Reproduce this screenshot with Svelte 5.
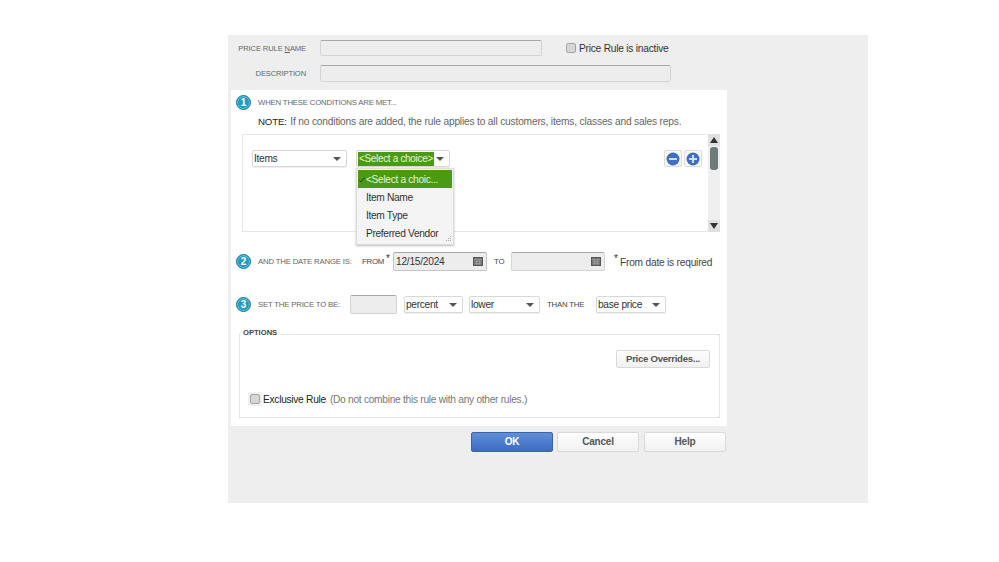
<script>
    let menu = ["Item Name", "Item Type", "Preferred Vendor"];
</script>

{#snippet badge(n)}
    <span class="badge">{n}</span>
{/snippet}

{#snippet caret()}
    <svg class="caret" width="8" height="4" viewBox="0 0 8 4"><path d="M0 0H8L4 4Z" fill="#555" /></svg>
{/snippet}

{#snippet select(label, cls)}
    <div class="select {cls}"><span>{label}</span>{@render caret()}</div>
{/snippet}

{#snippet cal()}
    <svg width="10" height="9" viewBox="0 0 10 9">
        <rect x="0.5" y="0.5" width="9" height="8" fill="#777" stroke="#555" />
        <path d="M1 2.5H9M2 4.5H8M2 6.5H8M3.5 3V8M6.5 3V8" stroke="#a5a5a5" stroke-width="0.6" />
    </svg>
{/snippet}

<div class="page">
    <div class="dialog">
        <div class="top-row first">
            <span class="top-label"><span>PRICE RULE <u>N</u>AME</span></span>
            <div class="field name"></div>
            <span class="check"></span>
            <span class="inactive">Price Rule is inactive</span>
        </div>
        <div class="top-row second">
            <span class="top-label"><span>DESCRIPTION</span></span>
            <div class="field desc"></div>
        </div>

        <div class="panel">
            <div class="step-head">
                {@render badge(1)}
                <span class="caps">WHEN THESE CONDITIONS ARE MET...</span>
            </div>
            <p class="note"><span>NOTE:</span> If no conditions are added, the rule applies to all customers, items, classes and sales reps.</p>

            <div class="conditions">
                <div class="cond-body">
                    {@render select("Items", "items")}
                    <div class="choice-wrap">
                        <div class="select choice"><span class="picked">&lt;Select a choice&gt;</span>{@render caret()}</div>
                        <div class="menu">
                            <div class="menu-item active">
                                <svg class="tick" width="6" height="6" viewBox="0 0 6 6"><path d="M0.5 3.5L2 5L5.5 0.5" fill="none" stroke="#173f00" /></svg>
                                &lt;Select a choic...
                            </div>
                            {#each menu as m}
                                <div class="menu-item">{m}</div>
                            {/each}
                            <svg class="grip" width="8" height="8" viewBox="0 0 8 8">
                                <path d="M6 1h1v1H6zM4 3h1v1H4zM6 3h1v1H6zM2 5h1v1H2zM4 5h1v1H4zM6 5h1v1H6z" fill="#aaa" />
                            </svg>
                        </div>
                    </div>
                    <div class="actions">
                        <button class="round-btn" aria-label="Remove">
                            <svg width="14" height="14" viewBox="0 0 14 14"><circle cx="7" cy="7" r="6.5" fill="#3f6fc0" /><path d="M3 7H11" stroke="#cfe0f7" stroke-width="2" /></svg>
                        </button>
                        <button class="round-btn" aria-label="Add">
                            <svg width="14" height="14" viewBox="0 0 14 14"><circle cx="7" cy="7" r="6.5" fill="#3f6fc0" /><path d="M3 7H11M7 3V11" stroke="#cfe0f7" stroke-width="2" /></svg>
                        </button>
                    </div>
                </div>
                <div class="scrollbar">
                    <svg class="arrow" width="12" height="12" viewBox="0 0 12 12"><path d="M2 9L6 3L10 9Z" fill="#333" /></svg>
                    <div class="track"><div class="thumb"></div></div>
                    <svg class="arrow" width="12" height="12" viewBox="0 0 12 12"><path d="M2 3L6 9L10 3Z" fill="#333" /></svg>
                </div>
            </div>

            <div class="date-row">
                {@render badge(2)}
                <span class="caps range">AND THE DATE RANGE IS:</span>
                <span class="small from">FROM</span>
                <span class="star">*</span>
                <div class="field date filled"><span>12/15/2024</span>{@render cal()}</div>
                <span class="small to">TO</span>
                <div class="field date"><span></span>{@render cal()}</div>
                <span class="star req-star">*</span>
                <span class="req">From date is required</span>
            </div>

            <div class="price-row">
                {@render badge(3)}
                <span class="caps price-label">SET THE PRICE TO BE:</span>
                <div class="field amount"></div>
                {@render select("percent", "percent")}
                {@render select("lower", "lower")}
                <span class="small than">THAN THE</span>
                {@render select("base price", "base")}
            </div>

            <div class="options">
                <span class="legend">OPTIONS</span>
                <div class="override-row">
                    <button class="btn override">Price Overrides...</button>
                </div>
                <div class="exclusive">
                    <span class="check-wrap"><span class="check"></span></span>
                    <span class="ex-label">Exclusive Rule</span>
                    <span class="ex-note">(Do not combine this rule with any other rules.)</span>
                </div>
            </div>
        </div>

        <div class="footer">
            <button class="btn primary">OK</button>
            <button class="btn">Cancel</button>
            <button class="btn help">Help</button>
        </div>
    </div>
</div>

<style>
    :global(body) {
        margin: 0;
        background: #fff;
    }
    .page {
        width: 999px;
        height: 562px;
        padding: 35px 0 0 228px;
        box-sizing: border-box;
        font-family: "Liberation Sans", Arial, sans-serif;
        color: #444;
        overflow: hidden;
    }
    .dialog {
        width: 640px;
        height: 468px;
        background: #eeeeee;
        padding: 5px 0 0 3px;
        box-sizing: border-box;
    }
    .top-row {
        display: flex;
        align-items: center;
        height: 16px;
    }
    .second {
        margin-top: 9px;
    }
    .top-label {
        flex: none;
        width: 75px;
        display: flex;
        justify-content: flex-end;
        margin-right: 14px;
        font-size: 7.6px;
        letter-spacing: -0.13px;
        color: #666;
        white-space: nowrap;
    }
    .field {
        flex: none;
        box-sizing: border-box;
        background: #ededed;
        border: 1px solid #d4d4d4;
        border-top-color: #a8a8a8;
        border-radius: 2px;
    }
    .name {
        width: 222px;
        height: 16px;
        margin-right: 24px;
    }
    .desc {
        width: 351px;
        height: 17px;
    }
    .check {
        display: block;
        flex: none;
        width: 10px;
        height: 10px;
        box-sizing: border-box;
        background: #d6d6d6;
        border: 1px solid #a5a5a5;
        border-radius: 2px;
    }
    .inactive {
        margin-left: 3px;
        font-size: 10.2px;
        letter-spacing: -0.23px;
        color: #333;
        white-space: nowrap;
    }
    .panel {
        width: 496px;
        height: 336px;
        margin-top: 9px;
        background: #fff;
        box-sizing: border-box;
        padding: 5px 0 0 5px;
    }
    .badge {
        flex: none;
        width: 15px;
        height: 15px;
        box-sizing: border-box;
        border-radius: 50%;
        background: #1f9cc0;
        border: 1px solid #177a9a;
        box-shadow: inset 0 0 0 1px #6cc8e0;
        color: #fff;
        font-size: 10px;
        font-weight: bold;
        line-height: 13px;
        text-align: center;
    }
    .step-head {
        display: flex;
        align-items: center;
        height: 15px;
    }
    .caps {
        flex: none;
        font-size: 7.8px;
        letter-spacing: -0.2px;
        color: #666;
        margin-left: 7px;
        white-space: nowrap;
    }
    .note {
        margin: 6px 0 0 22px;
        font-size: 10.2px;
        letter-spacing: -0.18px;
        line-height: 12px;
        color: #666;
        white-space: nowrap;
    }
    .note span {
        color: #222;
        font-size: 9.7px;
        margin-right: 1px;
    }
    .conditions {
        display: flex;
        width: 478px;
        height: 98px;
        margin: 6px 0 0 6px;
        border: 1px solid #e6e6e6;
        box-sizing: border-box;
        border-right: none;
    }
    .cond-body {
        flex: 1;
        display: flex;
        align-items: flex-start;
        padding: 15px 0 0 9px;
    }
    .select {
        flex: none;
        display: flex;
        align-items: center;
        justify-content: space-between;
        box-sizing: border-box;
        height: 17px;
        background: #fff;
        border: 1px solid #d8d8d8;
        border-radius: 2px;
        padding: 0 5px 0 1px;
        font-size: 10.2px;
        letter-spacing: -0.3px;
        color: #333;
        box-shadow: 0 1px 1px #eee;
    }
    .items {
        width: 95px;
        margin-right: 9px;
    }
    .choice-wrap {
        position: relative;
        flex: none;
        width: 94px;
    }
    .choice {
        padding-right: 5px;
    }
    .picked {
        background: #4b9a13;
        color: #e6f3da;
        padding: 0 1px;
        height: 14px;
        line-height: 14px;
        font-size: 10px;
        letter-spacing: -0.33px;
        white-space: nowrap;
    }
    .menu {
        position: absolute;
        top: 18px;
        left: 0;
        width: 98px;
        height: 77px;
        box-sizing: border-box;
        background: #f4f4f4;
        border: 1px solid #dcdcdc;
        box-shadow: 0 1px 2px #bbb;
        padding: 1px;
    }
    .menu-item {
        height: 18px;
        line-height: 20px;
        padding-left: 8px;
        font-size: 10.2px;
        letter-spacing: -0.33px;
        color: #333;
        position: relative;
    }
    .active {
        background: #4b9a13;
        color: #e6f3da;
    }
    .tick {
        position: absolute;
        left: 1px;
        top: 7px;
    }
    .grip {
        position: absolute;
        right: 1px;
        bottom: 1px;
    }
    .actions {
        display: flex;
        gap: 2px;
        margin-left: auto;
        margin-right: 6px;
    }
    .round-btn {
        display: flex;
        align-items: center;
        justify-content: center;
        width: 18px;
        height: 17px;
        padding: 0;
        background: #f8f8f8;
        border: 1px solid #dcdcdc;
        border-radius: 2px;
    }
    .scrollbar {
        flex: none;
        width: 12px;
        margin-top: -1px;
        height: 98px;
        background: #efefef;
        display: flex;
        flex-direction: column;
    }
    .arrow {
        flex: none;
        background: #e0e0e0;
    }
    .track {
        flex: 1;
        padding: 1px 2px;
    }
    .thumb {
        height: 23px;
        background: #6f7a7a;
        border-radius: 3px;
    }
    .date-row,
    .price-row {
        display: flex;
        align-items: center;
    }
    .date-row {
        height: 19px;
        margin-top: 20px;
    }
    .small {
        flex: none;
        font-size: 7.8px;
        letter-spacing: -0.2px;
        color: #444;
        white-space: nowrap;
    }
    .range {
        width: 104px;
    }
    .from {
        width: 24px;
    }
    .star {
        flex: none;
        font-size: 10px;
        color: #333;
        align-self: flex-start;
        margin-top: 1px;
        width: 7px;
    }
    .date {
        display: flex;
        align-items: center;
        justify-content: space-between;
        width: 94px;
        height: 19px;
        padding: 0 3px 0 2px;
        font-size: 10.2px;
        letter-spacing: -0.25px;
        color: #333;
    }
    .filled {
        border-color: #c4c4c4;
        border-top-color: #a8a8a8;
    }
    .to {
        width: 10px;
        margin: 0 7px;
    }
    .req-star {
        margin-left: 9px;
        width: 6px;
    }
    .req {
        flex: none;
        font-size: 10.2px;
        letter-spacing: -0.22px;
        color: #444;
        white-space: nowrap;
        margin-top: 2px;
    }
    .price-row {
        height: 19px;
        margin-top: 24px;
    }
    .price-label {
        width: 92px;
    }
    .amount {
        width: 47px;
        height: 19px;
        margin-right: 7px;
    }
    .percent {
        width: 59px;
        margin-right: 6px;
    }
    .lower {
        width: 71px;
        margin-right: 7px;
    }
    .than {
        width: 49px;
    }
    .base {
        width: 70px;
    }
    .options {
        position: relative;
        width: 481px;
        height: 84px;
        margin: 20px 0 0 3px;
        box-sizing: border-box;
        border: 1px solid #e6e6e6;
    }
    .legend {
        position: absolute;
        top: -7px;
        left: 0;
        padding: 0 3px;
        background: #fff;
        font-size: 7.6px;
        font-weight: bold;
        color: #444;
        line-height: 10px;
    }
    .override-row {
        display: flex;
        justify-content: flex-end;
        padding: 15px 9px 0 0;
    }
    .btn {
        width: 82px;
        height: 20px;
        padding: 0 0 1px;
        box-sizing: border-box;
        background: linear-gradient(#fdfdfd, #f1f1f1);
        border: 1px solid #d9d9d9;
        border-radius: 2px;
        font-family: inherit;
        font-size: 10px;
        letter-spacing: -0.2px;
        font-weight: bold;
        color: #555;
    }
    .override {
        width: 94px;
        height: 18px;
        font-size: 9.6px;
        letter-spacing: -0.28px;
    }
    .exclusive {
        display: flex;
        align-items: center;
        margin: 24px 0 0 8px;
        font-size: 10.2px;
        letter-spacing: -0.28px;
    }
    .check-wrap {
        padding: 2px;
        background: #f0f0f0;
        margin-right: 1px;
    }
    .ex-label {
        color: #222;
    }
    .ex-note {
        margin-left: 4px;
        color: #777;
    }
    .footer {
        display: flex;
        width: 495px;
        justify-content: flex-end;
        gap: 4px;
        margin-top: 6px;
    }
    .help {
        margin-left: 1px;
    }
    .primary {
        background: linear-gradient(#5f8fd8, #3d6bc0);
        border-color: #3a62ad;
        color: #fff;
    }
</style>
